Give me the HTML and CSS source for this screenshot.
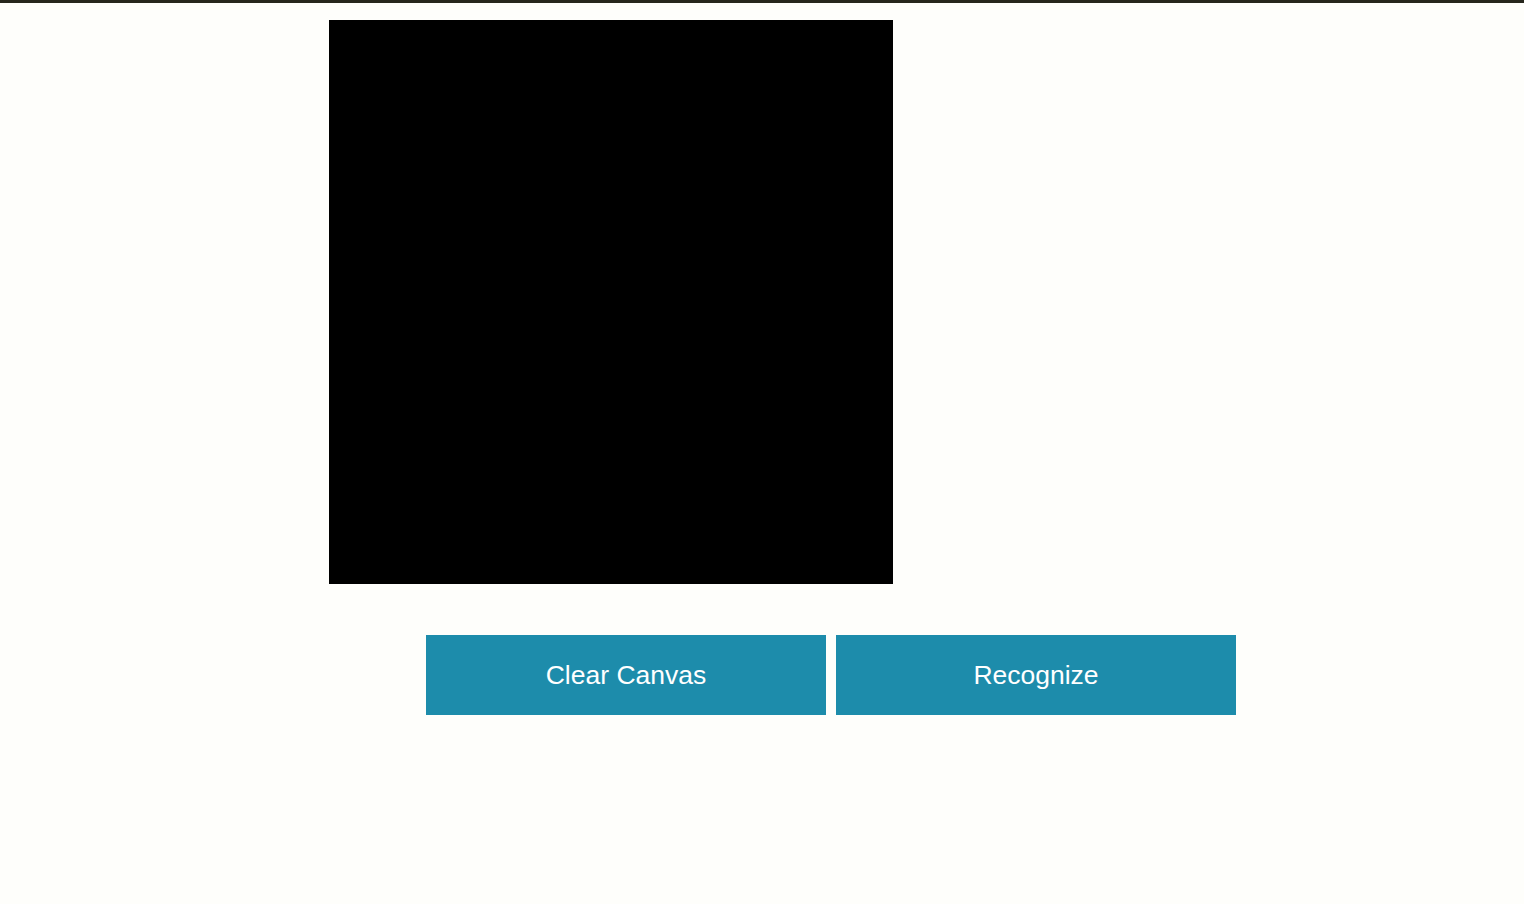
FILE: index.html
```html
<!DOCTYPE html>
<html>
<head>
<meta charset="utf-8">
<link rel="stylesheet" href="styles.css">
</head>
<body>
<div class="topbar"></div>
<main class="page">
  <div class="canvas-wrap">
    <canvas class="board" width="564" height="564"></canvas>
  </div>
  <div class="actions">
    <button class="btn">Clear Canvas</button>
    <button class="btn">Recognize</button>
  </div>
</main>
</body>
</html>
```
FILE: styles.css
```css
html, body {
  margin: 0;
  padding: 0;
  background: #fefefb;
  font-family: "Liberation Sans", Arial, sans-serif;
}
.topbar {
  height: 3px;
  background: #26261c;
}
.page {
  display: flex;
  flex-direction: column;
  padding-top: 17px;
}
.canvas-wrap {
  padding-left: 329px;
  display: flex;
}
.board {
  display: block;
  width: 564px;
  height: 564px;
  background: #000;
}
.actions {
  display: flex;
  gap: 10px;
  padding-left: 426px;
  margin-top: 51px;
}
.btn {
  width: 400px;
  height: 80px;
  border: none;
  margin: 0;
  background: #1d8cab;
  color: #fff;
  font-family: "Liberation Sans", Arial, sans-serif;
  font-size: 26.5px;
  padding: 0;
}
```
